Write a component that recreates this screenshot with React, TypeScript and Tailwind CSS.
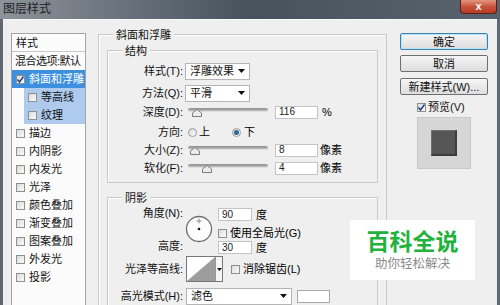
import React from "react";

const font = "font-[family-name:Liberation_Sans,Noto_Sans_CJK_SC,sans-serif]";

function Check({ checked = false }: { checked?: boolean }) {
  return (
    <span className="relative inline-flex w-[9px] h-[9px] shrink-0 border border-[#8e8f8f] bg-gradient-to-br from-[#dcdcdc] to-[#fbfbfb]">
      {checked && (
        <svg viewBox="0 0 9 9" className="absolute -left-px -top-px w-[9px] h-[9px]">
          <path d="M1.5 4.5 L3.5 7 L7.5 1.5" fill="none" stroke="#1c3f7a" strokeWidth="1.4" />
        </svg>
      )}
    </span>
  );
}

function Radio({ checked = false }: { checked?: boolean }) {
  return (
    <span className="inline-flex items-center justify-center w-[9px] h-[9px] rounded-full border border-[#9a9a9a] bg-gradient-to-br from-[#d8d8d8] to-[#ffffff]">
      {checked && <span className="w-[5px] h-[5px] rounded-full bg-[#2a6a9e]" />}
    </span>
  );
}

function Arrow() {
  return (
    <svg viewBox="0 0 7 4" className="w-[7px] h-[4px]">
      <path d="M0 0 H7 L3.5 4 Z" fill="#111" />
    </svg>
  );
}

function Select({ value, w }: { value: string; w: string }) {
  return (
    <div className={`${w} h-[17px] flex items-center justify-between bg-white border border-[#b5b5b5] pl-[4px] pr-[4px] text-[11px] text-[#111]`}>
      <span>{value}</span>
      <Arrow />
    </div>
  );
}

function Field({ value, w = "w-[43px]" }: { value: string; w?: string }) {
  return (
    <div className={`${w} h-[13px] flex items-center bg-white border border-[#c4c4c4] pl-[3px] text-[10px] leading-[12px] text-[#222]`}>
      {value}
    </div>
  );
}

function Slider({ at }: { at: number }) {
  return (
    <div className="relative w-[80px] h-[18px] ml-[5px]">
      <div className="absolute left-0 right-0 top-[5px] h-[4px] rounded-[2px] bg-gradient-to-b from-[#8c8c8c] to-[#bdbdbd] border-b border-[#e0e0e0]" />
      <svg viewBox="0 0 10 8" className="absolute top-[6px] w-[10px] h-[8px]" style={{ left: at }}>
        <path d="M0.5 7.5 V4 L5 0.5 L9.5 4 V7.5 Z" fill="#ececec" stroke="#7d7d7d" strokeWidth="1" />
      </svg>
    </div>
  );
}

function Label({ children, w = "w-[75px]" }: { children: React.ReactNode; w?: string }) {
  return <div className={`${w} shrink-0 text-right text-[11px] text-[#111] leading-[14px] whitespace-nowrap`}>{children}</div>;
}

function Group({ title, className = "", children }: { title: string; className?: string; children: React.ReactNode }) {
  return (
    <div className={`border border-[#c9c9c9] shadow-[inset_1px_1px_0_#ffffff] ${className}`}>
      <div className="-mt-[8px] ml-[14px] px-[3px] w-fit h-[16px] leading-[16px] bg-[#efefef] text-[11px] text-[#111]">
        {title}
      </div>
      {children}
    </div>
  );
}

const items = ["描边", "内阴影", "内发光", "光泽", "颜色叠加", "渐变叠加", "图案叠加", "外发光", "投影"];

function StyleList() {
  return (
    <div className="w-[75px] h-[290px] mt-[13px] border border-[#a4a4a4] bg-[#fbfbfb] text-[11px] text-[#111]">
      <div className="h-[18px] flex items-center pl-[4px] border-b border-[#c8c8c8]">样式</div>
      <div className="h-[18px] flex items-center pl-[3px] whitespace-nowrap tracking-[-0.5px]">混合选项:默认</div>
      <div className="h-[18px] flex items-center gap-[4px] pl-[4px] bg-[#3d8fe0] text-white whitespace-nowrap">
        <Check checked />
        <span>斜面和浮雕</span>
      </div>
      <div className="h-[18px] flex items-center gap-[4px] ml-[12px] pl-[4px] bg-[#aecbee]">
        <Check />
        <span>等高线</span>
      </div>
      <div className="h-[18px] flex items-center gap-[4px] ml-[12px] pl-[4px] bg-[#aecbee]">
        <Check />
        <span>纹理</span>
      </div>
      {items.map((t) => (
        <div key={t} className="h-[18px] flex items-center gap-[4px] pl-[4px]">
          <Check />
          <span>{t}</span>
        </div>
      ))}
    </div>
  );
}

function Structure() {
  return (
    <Group title="结构" className="mt-[7px] mx-[8px] pb-[5px]">
      <div className="mt-[3px] h-[18px] flex items-center">
        <Label>样式(T):</Label>
        <div className="ml-[2px]">
          <Select value="浮雕效果" w="w-[65px]" />
        </div>
      </div>
      <div className="mt-[4px] h-[18px] flex items-center">
        <Label>方法(Q):</Label>
        <div className="ml-[2px]">
          <Select value="平滑" w="w-[65px]" />
        </div>
      </div>
      <div className="mt-[1px] h-[18px] flex items-center">
        <Label>深度(D):</Label>
        <Slider at={4} />
        <div className="ml-[7px]">
          <Field value="116" />
        </div>
        <span className="ml-[4px] text-[11px]">%</span>
      </div>
      <div className="mt-[2px] h-[18px] flex items-center text-[11px]">
        <Label>方向:</Label>
        <div className="ml-[5px] flex items-center gap-[2px]">
          <Radio />
          <span>上</span>
        </div>
        <div className="ml-[22px] flex items-center gap-[3px]">
          <Radio checked />
          <span>下</span>
        </div>
      </div>
      <div className="h-[18px] flex items-center">
        <Label>大小(Z):</Label>
        <Slider at={2} />
        <div className="ml-[7px]">
          <Field value="8" />
        </div>
        <span className="ml-[2px] text-[11px]">像素</span>
      </div>
      <div className="h-[18px] flex items-center">
        <Label>软化(F):</Label>
        <Slider at={14} />
        <div className="ml-[7px]">
          <Field value="4" />
        </div>
        <span className="ml-[2px] text-[11px]">像素</span>
      </div>
    </Group>
  );
}

function Shading() {
  return (
    <Group title="阴影" className="mt-[14px] mx-[8px] h-[120px]">
      <div className="flex">
        <div className="h-[47px] flex flex-col justify-between">
          <Label>角度(N):</Label>
          <Label>高度:</Label>
        </div>
        <svg viewBox="0 0 28 28" className="ml-[2px] mt-[9px] w-[28px] h-[28px]">
          <circle cx="14" cy="14" r="12.5" fill="#fdfdfd" stroke="#6e6e6e" strokeWidth="1.3" />
          <path d="M14 3.5 V8.5 M11.5 6 H16.5" stroke="#777" strokeWidth="0.8" />
          <circle cx="14" cy="14" r="1.3" fill="#111" />
        </svg>
        <div className="ml-[5px] flex flex-col text-[11px]">
          <div className="mt-[2px] h-[13px] flex items-center">
            <Field value="90" w="w-[34px]" />
            <span className="ml-[4px]">度</span>
          </div>
          <div className="mt-[5px] h-[14px] flex items-center gap-[3px] whitespace-nowrap">
            <Check />
            <span>使用全局光(G)</span>
          </div>
          <div className="mt-[1px] h-[13px] flex items-center">
            <Field value="30" w="w-[34px]" />
            <span className="ml-[4px]">度</span>
          </div>
        </div>
      </div>
      <div className="mt-[2px] h-[26px] flex items-center">
        <Label>光泽等高线:</Label>
        <div className="ml-[3px] flex h-[26px] border border-[#777] bg-white">
          <svg viewBox="0 0 28 24" preserveAspectRatio="none" className="w-[28px] h-[24px]">
            <path d="M0 24 L28 0 V24 Z" fill="#9d9d9d" />
          </svg>
          <div className="w-[7px] flex items-center justify-center border-l border-[#999] bg-[#f4f4f4]">
            <svg viewBox="0 0 5 3" className="w-[5px] h-[3px]">
              <path d="M0 0 H5 L2.5 3 Z" fill="#111" />
            </svg>
          </div>
        </div>
        <div className="ml-[8px] flex items-center gap-[3px] text-[11px] whitespace-nowrap">
          <Check />
          <span>消除锯齿(L)</span>
        </div>
      </div>
      <div className="mt-[5px] h-[18px] flex items-center">
        <Label>高光模式(H):</Label>
        <div className="ml-[3px]">
          <Select value="滤色" w="w-[106px]" />
        </div>
        <div className="ml-[5px] w-[33px] h-[13px] bg-white border border-[#a9a9a9]" />
      </div>
    </Group>
  );
}

function Btn({ children, primary = false }: { children: React.ReactNode; primary?: boolean }) {
  return (
    <div
      className={`h-[17px] flex items-center justify-center rounded-[2px] text-[11px] text-[#111] bg-gradient-to-b from-[#f6f6f6] to-[#dddddd] border ${
        primary ? "border-[#3c7fb1] shadow-[inset_0_0_0_1px_#b5e3f7]" : "border-[#707070]"
      }`}
    >
      {children}
    </div>
  );
}

function RightColumn() {
  return (
    <div className="w-[88px] ml-[13px] mt-[13px] flex flex-col">
      <Btn primary>确定</Btn>
      <div className="mt-[5px]">
        <Btn>取消</Btn>
      </div>
      <div className="mt-[6px]">
        <Btn>新建样式(W)...</Btn>
      </div>
      <div className="mt-[5px] h-[14px] pl-[17px] flex items-center gap-[2px] text-[11px] text-[#111]">
        <Check checked />
        <span>预览(V)</span>
      </div>
      <div className="mt-[3px] mx-auto w-[54px] h-[52px] flex items-center justify-center bg-[#d6d6d6] border border-[#c9c9c9]">
        <div className="w-[26px] h-[26px] bg-[#565656] border-t border-l border-[#6e6e6e] border-b-[2px] border-r-[2px] border-b-[#3c3c3c] border-r-[#3c3c3c]" />
      </div>
    </div>
  );
}

export default function App() {
  return (
    <div className={`relative w-[500px] h-[305px] overflow-hidden bg-[#5f6770] leading-[14px] ${font}`}>
      <div className="h-[19px] flex items-start justify-between bg-gradient-to-r from-[#8d939a] via-[#47525d] to-[#59636d]">
        <span className="ml-[3px] mt-[1px] text-[12px] leading-[16px] text-[#1d2227]">图层样式</span>
        <div className="mr-[3px] w-[37px] h-[14px] flex items-center justify-center rounded-b-[4px] border border-t-0 border-[#5a1f17] bg-gradient-to-b from-[#e3957f] via-[#c9533c] to-[#b83a22] text-white text-[11px] font-bold leading-none">
          x
        </div>
      </div>
      <div className="mx-[3px] h-[286px] flex bg-[#efefef] pl-[8px] border-t border-[#f8f8f8]">
        <StyleList />
        <div className="w-[289px] ml-[12px] mt-[14px]">
          <Group title="斜面和浮雕" className="h-[280px]">
            <Structure />
            <Shading />
          </Group>
        </div>
        <RightColumn />
      </div>
      <div className="absolute left-[350px] top-[220px] w-[125px] h-[60px] bg-white flex flex-col items-center justify-center">
        <span className="text-[23px] leading-[26px] font-bold text-[#22b23c]">百科全说</span>
        <span className="mt-[2px] text-[12.5px] leading-[14px] text-[#8a8a8a]">助你轻松解决</span>
      </div>
    </div>
  );
}
